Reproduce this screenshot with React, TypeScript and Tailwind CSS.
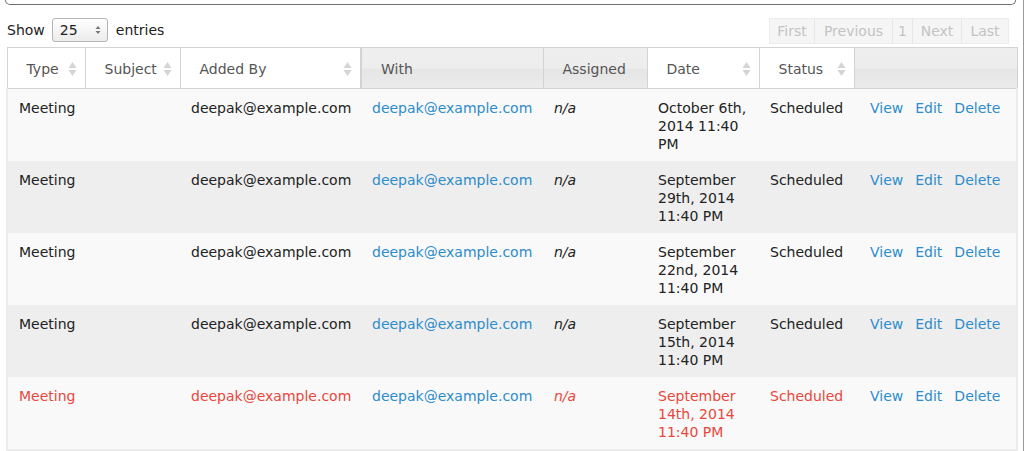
import * as React from "react";

const rows = [
	{ date: ["October 6th,", "2014 11:40", "PM"], hot: false },
	{ date: ["September", "29th, 2014", "11:40 PM"], hot: false },
	{ date: ["September", "22nd, 2014", "11:40 PM"], hot: false },
	{ date: ["September", "15th, 2014", "11:40 PM"], hot: false },
	{ date: ["September", "14th, 2014", "11:40 PM"], hot: true },
];

function SortIcon() {
	return (
		<svg width="9" height="16" viewBox="0 0 9 16" className="shrink-0">
			<path d="M4.5 1 L8.5 7 L0.5 7 Z" fill="#d4d4d4" />
			<path d="M4.5 15 L8.5 9 L0.5 9 Z" fill="#d4d4d4" />
		</svg>
	);
}

function Th({
	label,
	width,
	sort,
	plain,
	className = "",
}: {
	label?: string;
	width: string;
	sort?: boolean;
	plain?: boolean;
	className?: string;
}) {
	return (
		<th
			className={
				"h-[41px] p-0 text-left font-normal align-middle border-r border-[#d3d3d3] " +
				width +
				" " +
				(plain
					? "bg-[linear-gradient(to_bottom,#eeeeee_0%,#ededed_50%,#e5e5e5_52%,#ebebeb_100%)] "
					: "bg-white ") +
				className
			}
		>
			<div className="flex items-center justify-between pt-[2px] pl-[19px] pr-[8px] text-[#555]">
				<span>{label}</span>
				{sort && <SortIcon />}
			</div>
		</th>
	);
}

export default function App() {
	return (
		<div
			className="w-[1024px] h-[451px] overflow-hidden bg-white border-r border-[#9a9a9a] text-[14px] leading-[18px] text-[#222]"
			style={{ fontFamily: '"DejaVu Sans", Verdana, sans-serif' }}
		>
			<div className="ml-[5px] w-[1011px] h-[5px] border-x border-b border-[#6f6f6f] rounded-b-[5px]" />

			<div className="flex items-center justify-between pl-[7px] pr-[14px] mt-[11px] h-[27px]">
				<div className="flex items-center">
					<span>Show</span>
					<div className="ml-[7px] w-[56px] h-[24px] rounded-[3px] border border-[#b5b5b5] bg-[linear-gradient(to_bottom,#ffffff,#ececec)] flex items-center justify-between pl-[7px] pr-[6px]">
						<span>25</span>
						<svg width="6" height="10" viewBox="0 0 6 10">
							<path d="M3 1 L5.5 4 L0.5 4 Z" fill="#777" />
							<path d="M3 9 L5.5 6 L0.5 6 Z" fill="#777" />
						</svg>
					</div>
					<span className="ml-[8px]">entries</span>
				</div>
				<div className="flex h-[26px] mt-[2px] text-[#c3c3c3] bg-[#f5f5f5] border border-[#ececec]">
					<span className="w-[45px] flex items-center justify-center border-r border-[#e6e6e6]">First</span>
					<span className="w-[78px] flex items-center justify-center border-r border-[#e6e6e6]">Previous</span>
					<span className="w-[20px] flex items-center justify-center border-r border-[#e6e6e6]">1</span>
					<span className="w-[49px] flex items-center justify-center border-r border-[#e6e6e6]">Next</span>
					<span className="w-[46px] flex items-center justify-center">Last</span>
				</div>
			</div>

			<table className="ml-[6px] mt-[4px] w-[1010px] table-fixed border-collapse">
				<thead>
					<tr className="border border-[#d3d3d3]">
						<Th label="Type" width="w-[78px]" sort />
						<Th label="Subject" width="w-[95px]" sort />
						<Th label="Added By" width="w-[181px]" sort className="border-r-2" />
						<Th label="With" width="w-[182px]" plain />
						<Th label="Assigned" width="w-[104px]" plain />
						<Th label="Date" width="w-[112px]" sort />
						<Th label="Status" width="w-[95px]" sort />
						<Th width="w-[163px]" plain className="border-r-0" />
					</tr>
				</thead>
				<tbody className="border-x-2 border-b-2 border-[#ececec]">
					{rows.map((r, i) => {
						const tone = r.hot ? "text-[#e8473d]" : "text-[#222]";
						const cell = "align-top pt-[10px] pb-[8px] pl-[11px] " + tone;
						return (
							<tr key={i} className={i % 2 === 0 ? "bg-[#f9f9f9]" : "bg-[#eeeeee]"}>
								<td className={cell + " pl-[10px]"}>Meeting</td>
								<td className={cell}></td>
								<td className={cell}>deepak@example.com</td>
								<td className={"align-top pt-[10px] pb-[8px] pl-[11px] text-[#2d8ccc]"}>
									deepak@example.com
								</td>
								<td className={cell + " italic"}>n/a</td>
								<td className={cell}>
									{r.date[0]}
									<br />
									{r.date[1]}
									<br />
									{r.date[2]}
								</td>
								<td className={cell}>Scheduled</td>
								<td className="align-top pt-[10px] pb-[8px] pl-[16px] text-[#2d8ccc]">
									<div className="flex gap-[12px]">
										<a>View</a>
										<a>Edit</a>
										<a>Delete</a>
									</div>
								</td>
							</tr>
						);
					})}
				</tbody>
			</table>
		</div>
	);
}
